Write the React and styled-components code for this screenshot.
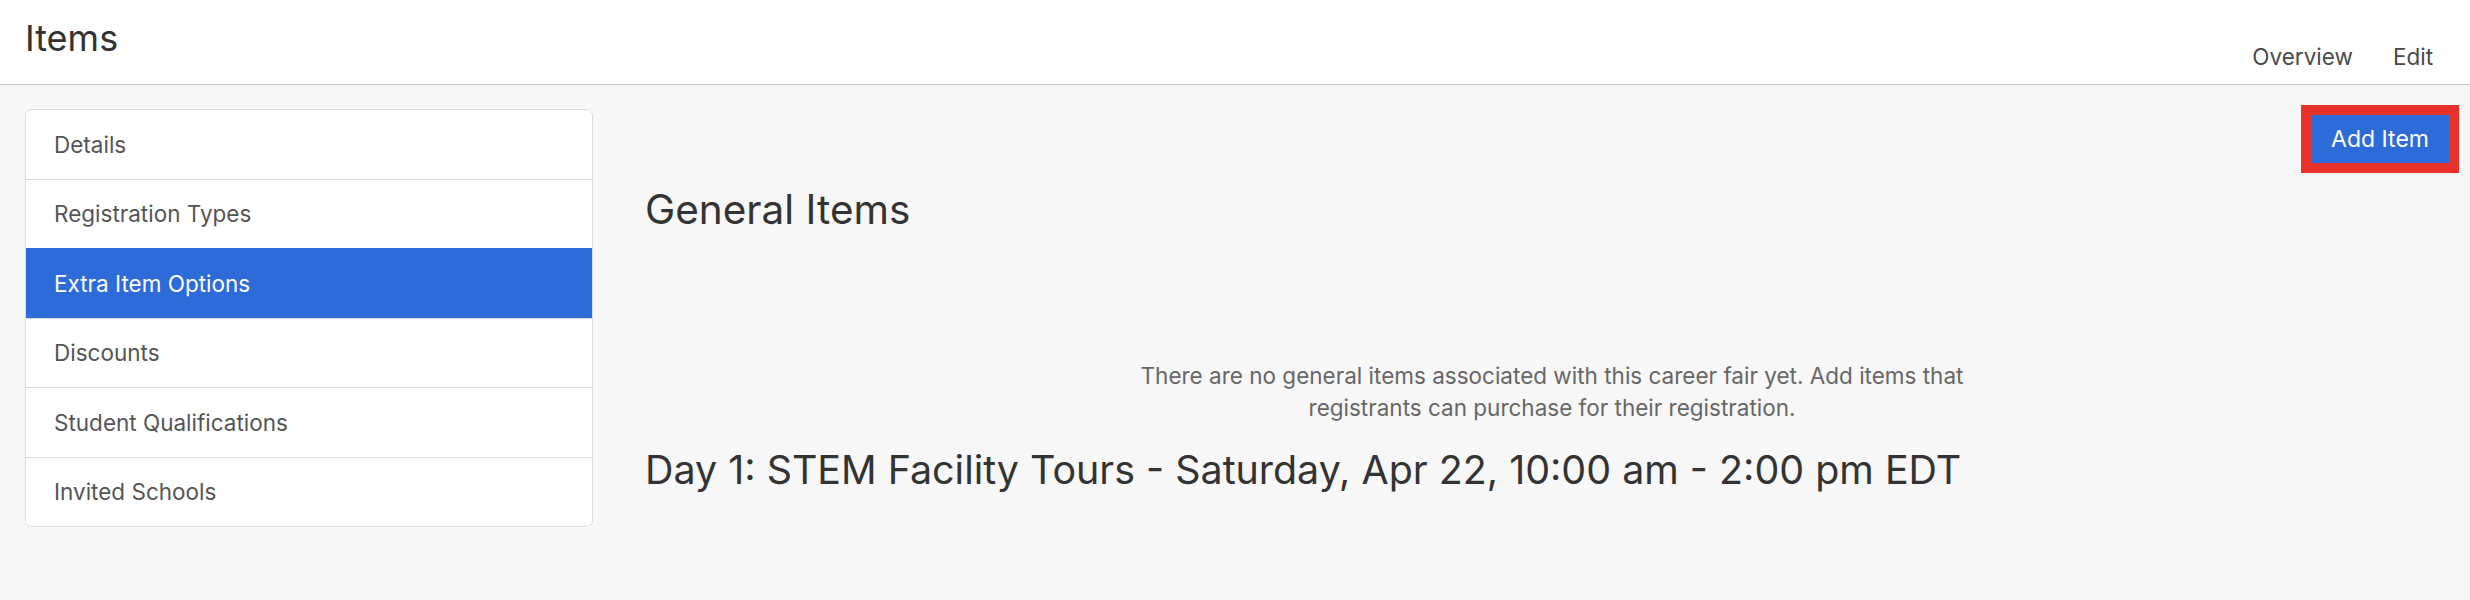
import React from 'react'
import styled, { createGlobalStyle } from 'styled-components'

const GlobalStyle = createGlobalStyle`
  body {
    margin: 0;
    background: #f7f7f7;
    font-family: Inter, "Noto Sans", sans-serif;
  }
`

const Header = styled.header`
  height: 84px;
  background: #fff;
  border-bottom: 1px solid #bcc3ce;
  display: flex;
  justify-content: space-between;
  padding: 0 37px 0 25px;
`

const Title = styled.h1`
  margin: 0;
  padding-top: 14px;
  font-size: 36px;
  line-height: 48px;
  font-weight: 400;
  color: #333;
`

const Nav = styled.nav`
  display: flex;
  align-items: flex-end;
  gap: 40px;
  padding-bottom: 13px;
`

const NavLink = styled.a`
  font-size: 22.5px;
  line-height: 28px;
  color: #4a4a4a;
  cursor: pointer;
`

const Body = styled.div`
  display: flex;
  padding: 20px 11px 40px 25px;
`

const Sidebar = styled.ul`
  list-style: none;
  margin: 4px 0 0;
  padding: 0;
  width: 566px;
  flex-shrink: 0;
  align-self: flex-start;
  background: #fff;
  border: 1px solid #dcdcdc;
  border-radius: 7px;
  overflow: hidden;
`

const SideItem = styled.li`
  height: 68.5px;
  display: flex;
  align-items: center;
  padding-left: 28px;
  font-size: 22.5px;
  color: ${p => (p.$active ? '#fff' : '#555')};
  background: ${p => (p.$active ? '#2d6cd8' : '#fff')};
  border-top: 1px solid ${p => (p.$active ? '#2d6cd8' : '#dcdcdc')};
  &:first-child {
    border-top: none;
  }
`

const Main = styled.main`
  flex: 1;
  margin-left: 52px;
  display: flex;
  flex-direction: column;
`

const Toolbar = styled.div`
  display: flex;
  justify-content: flex-end;
`

const AddButton = styled.button`
  width: 138px;
  height: 48px;
  margin: 10px;
  border: none;
  background: #2d6cd8;
  color: #fff;
  font-family: inherit;
  font-size: 23px;
  outline: 10px solid #e8312b;
  cursor: pointer;
`

const SectionTitle = styled.h2`
  margin: ${p => p.$top}px 0 0;
  font-size: ${p => p.$size}px;
  line-height: 48px;
  font-weight: 400;
  color: #333;
`

const Empty = styled.p`
  margin: 126px auto 0;
  max-width: 840px;
  text-align: center;
  font-size: 22.5px;
  line-height: 32px;
  color: #666;
`

const sections = [
  'Details',
  'Registration Types',
  'Extra Item Options',
  'Discounts',
  'Student Qualifications',
  'Invited Schools',
]

export default function App() {
  return (
    <>
      <GlobalStyle />
      <Header>
        <Title>Items</Title>
        <Nav>
          <NavLink>Overview</NavLink>
          <NavLink>Edit</NavLink>
        </Nav>
      </Header>
      <Body>
        <Sidebar>
          {sections.map(s => (
            <SideItem key={s} $active={s === 'Extra Item Options'}>
              {s}
            </SideItem>
          ))}
        </Sidebar>
        <Main>
          <Toolbar>
            <AddButton>Add Item</AddButton>
          </Toolbar>
          <SectionTitle $top={13} $size={40.5}>General Items</SectionTitle>
          <Empty>
            There are no general items associated with this career fair yet. Add items that
            registrants can purchase for their registration.
          </Empty>
          <SectionTitle $top={22} $size={39.4}>
            Day 1: STEM Facility Tours - Saturday, Apr 22, 10:00 am - 2:00 pm EDT
          </SectionTitle>
        </Main>
      </Body>
    </>
  )
}
